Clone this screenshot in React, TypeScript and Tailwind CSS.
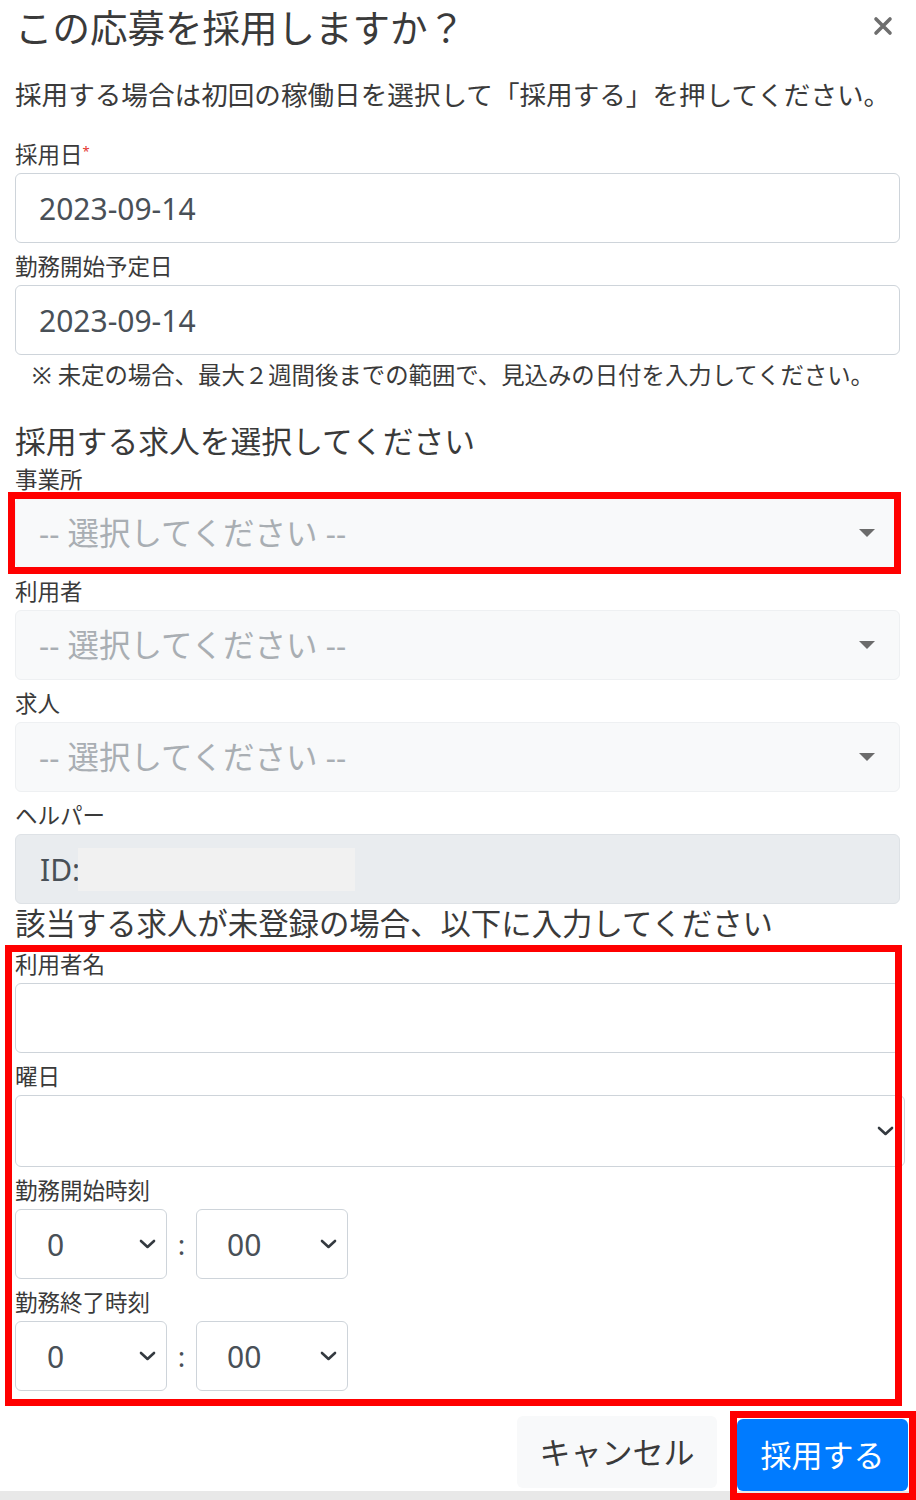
import React from 'react';

const jp = { fontFamily: '"Noto Sans", "Noto Sans CJK JP", sans-serif' };

function Label({ children, required }: { children: React.ReactNode; required?: boolean }) {
  return (
    <div className="h-[30px] text-[22.5px] leading-[30px] text-[#3a3a3a]">
      {children}
      {required && <span className="align-top text-[13px] leading-[22px] text-[#e3342f]">*</span>}
    </div>
  );
}

function Caret() {
  return (
    <svg width="18" height="10" viewBox="0 0 18 10" className="shrink-0">
      <path d="M1 1 L17 1 L9 9 Z" fill="#6b6b6b" />
    </svg>
  );
}

function Chevron() {
  return (
    <svg width="17" height="10" viewBox="0 0 17 10" className="shrink-0">
      <path d="M2 2 L8.5 8 L15 2" fill="none" stroke="#343a40" strokeWidth="2.6" strokeLinecap="round" strokeLinejoin="round" />
    </svg>
  );
}

function TextBox({ value }: { value?: string }) {
  return (
    <div className="mt-[3px] flex h-[70px] items-center rounded-md border border-[#ced4da] bg-white pl-[23px] text-[30px] text-[#495057]">
      {value}
    </div>
  );
}

function PlaceholderSelect() {
  return (
    <div className="mt-[3px] flex h-[70px] items-center justify-between rounded-md border border-[#eef0f2] bg-[#f8f9fa] pl-[23px] pr-[23px] text-[31.5px] text-[#a9aeb3]">
      <span>-- 選択してください --</span>
      <Caret />
    </div>
  );
}

function TimeSelect({ value, pad }: { value: string; pad: string }) {
  return (
    <div className={`flex h-[70px] w-[152px] items-center justify-between rounded-md border border-[#ced4da] bg-white pr-[10px] text-[30px] text-[#495057] ${pad}`}>
      <span>{value}</span>
      <Chevron />
    </div>
  );
}

function TimeRow() {
  return (
    <div className="mt-[3px] flex items-center">
      <TimeSelect value="0" pad="pl-[31px]" />
      <span className="w-[29px] text-center text-[28px] text-[#495057]">:</span>
      <TimeSelect value="00" pad="pl-[30px]" />
    </div>
  );
}

export default function App() {
  return (
    <div className="flex h-[1500px] w-[916px] flex-col bg-white" style={jp}>
      <div className="pl-[15px] pr-[16px]">
        {/* header */}
        <div className="flex h-[52px] items-start justify-between pt-[4px]">
          <h5 className="text-[37.5px] leading-[48px] text-[#3a3a3a]">この応募を採用しますか？</h5>
          <svg width="20" height="20" viewBox="0 0 20 20" className="mr-[7px] mt-[12px]">
            <path d="M3 3 L17 17 M17 3 L3 17" stroke="#6e6e6e" strokeWidth="3.6" strokeLinecap="round" />
          </svg>
        </div>

        <p className="mt-[25px] text-[26.6px] leading-[36px] text-[#3a3a3a]">
          採用する場合は初回の稼働日を選択して「採用する」を押してください。
        </p>

        <div className="mt-[27px]">
          <Label required>採用日</Label>
          <TextBox value="2023-09-14" />
        </div>
        <div className="mt-[9px]">
          <Label>勤務開始予定日</Label>
          <TextBox value="2023-09-14" />
        </div>
        <p className="mt-[7px] pl-[17px] text-[23.4px] leading-[26px] text-[#3a3a3a]">
          ※ 未定の場合、最大２週間後までの範囲で、見込みの日付を入力してください。
        </p>

        <h6 className="mt-[33px] text-[30.8px] leading-[40px] text-[#3a3a3a]">採用する求人を選択してください</h6>

        <div className="mt-[4px]">
          <Label>事業所</Label>
          <div className="relative">
            <PlaceholderSelect />
            <div className="pointer-events-none absolute -bottom-[6px] -left-[7px] -right-[1px] -top-[6px] border-[7px] border-[#ff0000]" />
          </div>
        </div>
        <div className="mt-[9px]">
          <Label>利用者</Label>
          <PlaceholderSelect />
        </div>
        <div className="mt-[9px]">
          <Label>求人</Label>
          <PlaceholderSelect />
        </div>
        <div className="mt-[9px]">
          <Label>ヘルパー</Label>
          <div className="mt-[3px] flex h-[70px] items-center rounded-md border border-[#dee2e6] bg-[#e9ecef] pl-[24px] text-[30px] text-[#495057]">
            <span>ID:</span>
            <span className="-ml-[2px] h-[43px] w-[277px] bg-[#f1f1f1]" />
          </div>
        </div>

        <h6 className="text-[30.4px] leading-[40px] text-[#3a3a3a]">該当する求人が未登録の場合、以下に入力してください</h6>

        <div className="relative mt-[6px]">
          <div>
            <Label>利用者名</Label>
            <TextBox />
          </div>
          <div className="mt-[9px]">
            <Label>曜日</Label>
            <div className="-mr-[5px] mt-[3px] flex h-[72px] items-center justify-end rounded-md border border-[#ced4da] bg-white pr-[10px]">
              <Chevron />
            </div>
          </div>
          <div className="mt-[9px]">
            <Label>勤務開始時刻</Label>
            <TimeRow />
          </div>
          <div className="mt-[9px]">
            <Label>勤務終了時刻</Label>
            <TimeRow />
          </div>
          <div className="pointer-events-none absolute -bottom-[15px] -left-[10px] -right-[2px] -top-[5px] border-[7px] border-[#ff0000]" />
        </div>
      </div>

      {/* footer */}
      <div className="mt-[25px] flex items-start justify-end gap-[20px] pr-[8px]">
        <button className="h-[72px] w-[200px] rounded-md bg-[#f8f9fa] text-[31px] text-[#3a3a3a]">キャンセル</button>
        <div className="relative mt-[3px]">
          <button className="h-[72px] w-[171px] rounded-md bg-[#007bff] text-[31px] text-white">採用する</button>
          <div className="pointer-events-none absolute -bottom-[9px] -left-[7px] -right-[8px] -top-[8px] border-[7px] border-[#ff0000]" />
        </div>
      </div>
      <div className="flex-1 bg-[#e8e8e8]" />
    </div>
  );
}
